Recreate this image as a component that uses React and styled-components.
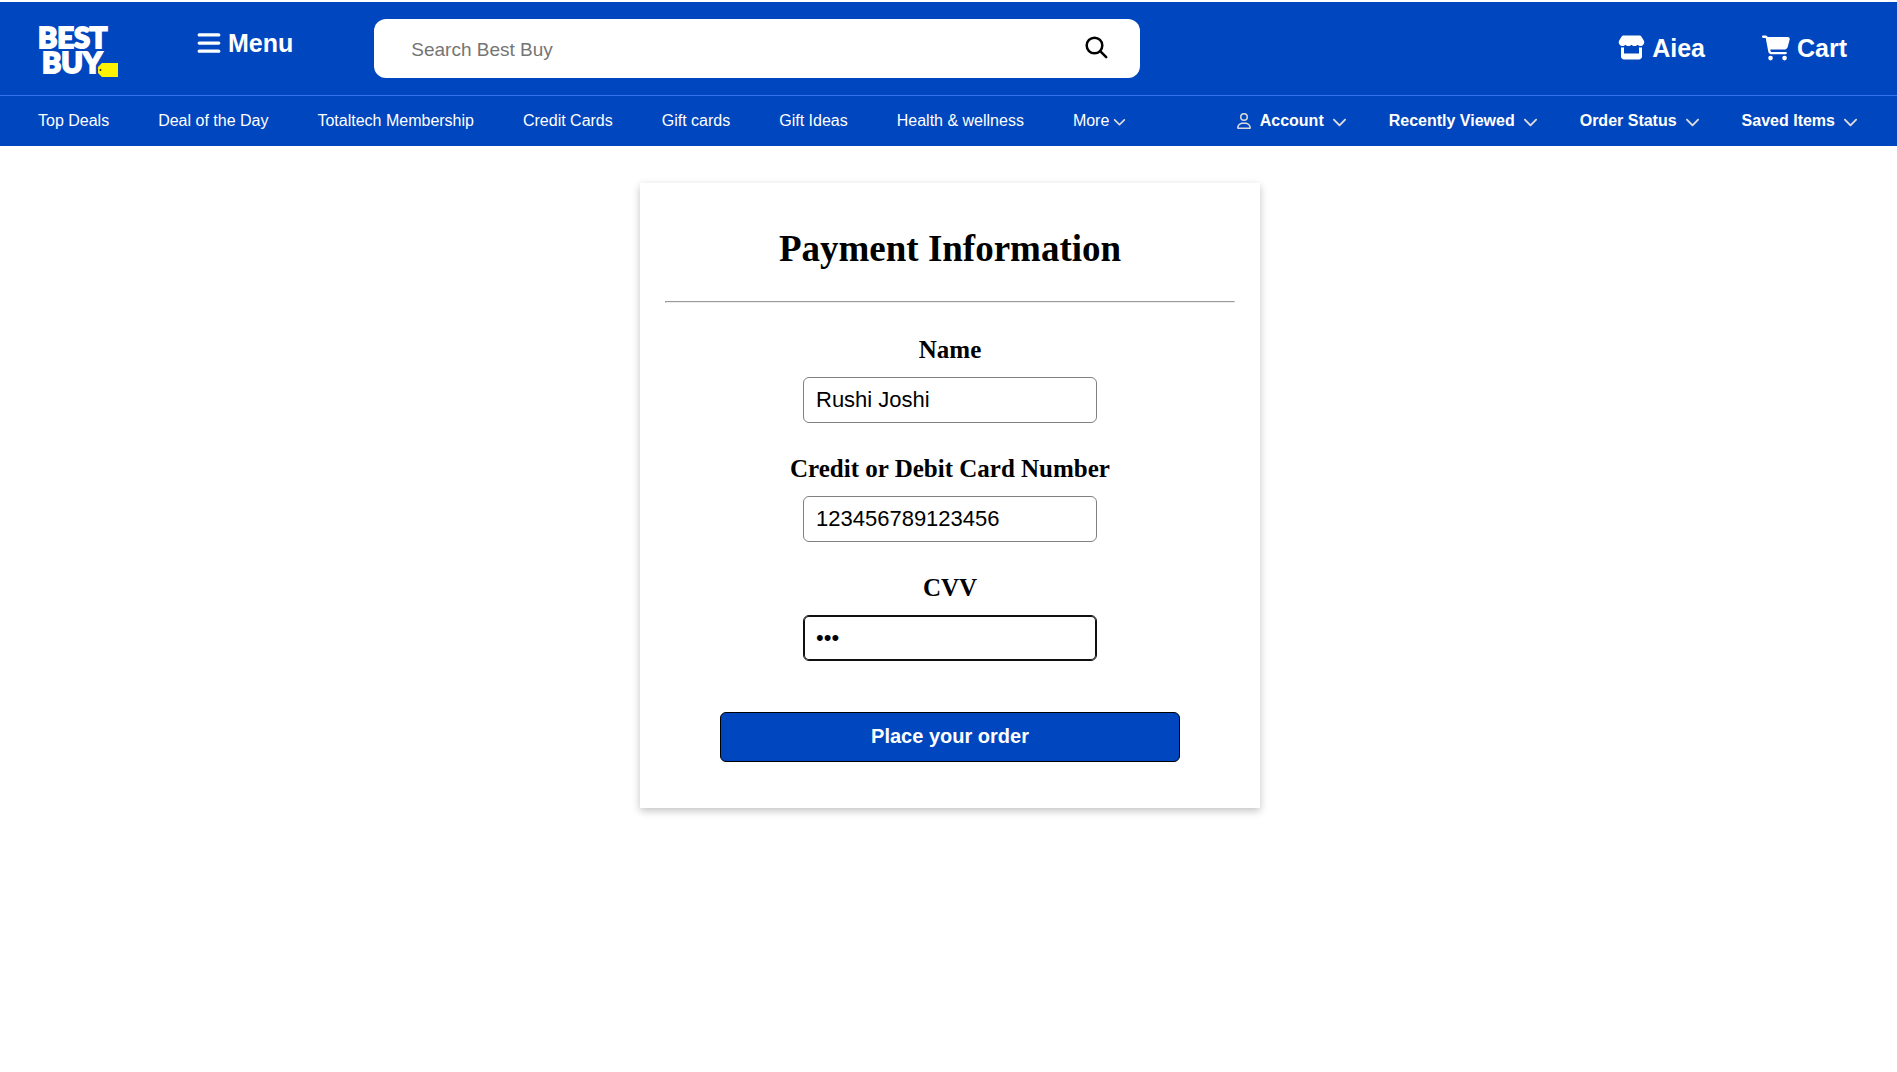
import React from "react";
import styled, { createGlobalStyle } from "styled-components";
import {
  FaBars,
  FaCartShopping,
  FaChevronDown,
  FaRegUser,
  FaStore,
} from "react-icons/fa6";

const BLUE = "#0046be";
const SANS = '"Liberation Sans", Arial, sans-serif';
const SERIF = '"Liberation Serif", "Times New Roman", serif';

const GlobalStyle = createGlobalStyle`
  *, *::before, *::after { box-sizing: border-box; }
  body {
    margin: 0;
    padding-top: 2px;
    background: #fff;
    color: #000;
    font-family: ${SANS};
  }
  button, input { font-family: inherit; }
`;

const Header = styled.header`
  background: ${BLUE};
  color: #fff;
`;

const TopBar = styled.div`
  display: flex;
  align-items: center;
  min-height: 94px;
  padding: 17px 50px 17px 38px;
  border-bottom: 1px solid #3370f0;
`;

const LogoLink = styled.a`
  position: relative;
  width: 80px;
  flex: none;
  margin-right: 78px;
  color: #fff;
  text-decoration: none;
`;

const LogoText = styled.span`
  display: block;
  width: 68px;
  font-family: Lato, ${SANS};
  font-size: 29px;
  font-weight: 900;
  line-height: 25px;
  text-align: center;
  -webkit-text-stroke: 2px #fff;
`;

const Tag = styled.svg`
  position: absolute;
  right: 0;
  bottom: -3px;
  width: 20px;
  height: 14px;
`;

const MenuButton = styled.button`
  display: flex;
  align-items: center;
  align-self: flex-start;
  gap: 6px;
  margin-right: 81px;
  padding: 9px 0;
  border: 0;
  background: none;
  color: inherit;
  font-size: 25px;
  font-weight: 700;
  line-height: 30px;
  cursor: pointer;
`;

const SearchForm = styled.form`
  display: flex;
  align-items: center;
  flex: 0 1 766px;
  height: 59px;
  padding: 0 29px 0 37px;
  border-radius: 12px;
  background: #fff;
`;

const SearchInput = styled.input`
  flex: 1;
  min-width: 0;
  padding: 2px 0 0;
  border: 0;
  outline: 0;
  background: none;
  font-size: 19px;
  line-height: 24px;
  &::placeholder { color: #757575; }
`;

const SearchButton = styled.button`
  display: flex;
  padding: 2px 3px 4px;
  border: 0;
  background: none;
  color: #000;
  cursor: pointer;
`;

const TopLinks = styled.div`
  display: flex;
  gap: 57px;
  margin-left: auto;
  padding-bottom: 2px;
`;

const TopLink = styled.a`
  display: flex;
  align-items: center;
  gap: 7px;
  color: inherit;
  font-size: 25px;
  font-weight: 700;
  line-height: 30px;
  text-decoration: none;
`;

const NavBar = styled.nav`
  display: flex;
  align-items: center;
  justify-content: space-between;
  min-height: 50px;
  padding: 0 39px 0 38px;
`;

const NavGroup = styled.div`
  display: flex;
  align-items: center;
  gap: ${(p) => p.$gap}px;
`;

const NavLink = styled.a`
  color: inherit;
  font-size: 16px;
  line-height: 20px;
  text-decoration: none;
  white-space: nowrap;
`;

const NavButton = styled.button`
  display: flex;
  align-items: center;
  gap: ${(p) => (p.$bold ? 8 : 4)}px;
  padding: 0;
  border: 0;
  background: none;
  color: inherit;
  font-size: 16px;
  font-weight: ${(p) => (p.$bold ? 700 : 400)};
  line-height: 20px;
  white-space: nowrap;
  cursor: pointer;
  svg { color: #dcdcdc; }
`;

const Main = styled.main`
  display: flex;
  justify-content: center;
  padding: 37px 20px 37px 23px;
`;

const Card = styled.form`
  display: flex;
  flex-direction: column;
  align-items: center;
  width: 100%;
  max-width: 620px;
  padding: 44px 25px 46px;
  background: #fff;
  box-shadow: rgba(0, 0, 0, 0.24) 0 3px 8px;
`;

const Title = styled.h1`
  margin: 0;
  font-family: ${SERIF};
  font-size: 37px;
  font-weight: 700;
  line-height: 44px;
`;

const Rule = styled.hr`
  width: 100%;
  margin: 30px 0 32px;
`;

const Field = styled.div`
  display: flex;
  flex-direction: column;
  align-items: center;
  gap: 12px;
  margin-bottom: 31px;
`;

const Label = styled.label`
  font-family: ${SERIF};
  font-size: 25px;
  font-weight: 700;
  line-height: 30px;
`;

const TextInput = styled.input`
  width: 294px;
  height: 46px;
  padding: 0 12px;
  border: 1px solid #808080;
  border-radius: 6px;
  background: #fff;
  color: #000;
  font-size: 22px;
  &:focus {
    outline: 0;
    border-color: #101010;
    box-shadow: inset 0 0 0 1px #101010;
    caret-color: transparent;
  }
`;

const OrderButton = styled.button`
  width: 100%;
  max-width: 460px;
  height: 50px;
  margin-top: 20px;
  padding: 0 0 2px;
  border: 1px solid #000;
  border-radius: 6px;
  background: ${BLUE};
  color: #fff;
  font-size: 20px;
  font-weight: 700;
  cursor: pointer;
`;

const LINKS = [
  "Top Deals",
  "Deal of the Day",
  "Totaltech Membership",
  "Credit Cards",
  "Gift cards",
  "Gift Ideas",
  "Health & wellness",
];

const ACCOUNT_MENUS = ["Account", "Recently Viewed", "Order Status", "Saved Items"];

const FIELDS = [
  { id: "name", label: "Name", type: "text", value: "Rushi Joshi" },
  { id: "card", label: "Credit or Debit Card Number", type: "text", value: "123456789123456" },
  { id: "cvv", label: "CVV", type: "password", value: "123", focused: true },
];

function Logo() {
  return (
    <LogoLink href="#home">
      <LogoText>BEST<br />BUY</LogoText>
      <Tag viewBox="0 0 20 14" aria-hidden="true">
        <path d="M4 0H20V14H4L0 10V4Z" fill="#fff200" />
        <circle cx="2.500" cy="7" r="1" fill="#1d252c" />
      </Tag>
    </LogoLink>
  );
}

function SearchIcon() {
  return (
    <svg width="23" height="23" viewBox="0 0 23 23" fill="none" stroke="currentColor" strokeWidth="2.500" strokeLinecap="round" aria-hidden="true">
      <circle cx="9.500" cy="9.500" r="7.800" />
      <path d="M15.200 15.200L21.200 21.200" />
    </svg>
  );
}

export default function App() {
  return (
    <>
      <GlobalStyle />
      <Header>
        <TopBar>
          <Logo />
          <MenuButton type="button"><FaBars size={26} />Menu</MenuButton>
          <SearchForm role="search">
            <SearchInput type="text" placeholder="Search Best Buy" aria-label="Search Best Buy" />
            <SearchButton type="button" aria-label="Search"><SearchIcon /></SearchButton>
          </SearchForm>
          <TopLinks>
            <TopLink href="#store"><FaStore size={27} />Aiea</TopLink>
            <TopLink href="#cart"><FaCartShopping size={28} />Cart</TopLink>
          </TopLinks>
        </TopBar>
        <NavBar>
          <NavGroup $gap={49}>
            {LINKS.map((text) => <NavLink href="#" key={text}>{text}</NavLink>)}
            <NavButton type="button">More<FaChevronDown size={13} /></NavButton>
          </NavGroup>
          <NavGroup $gap={42}>
            {ACCOUNT_MENUS.map((text, i) => (
              <NavButton type="button" $bold key={text}>
                {i === 0 && <FaRegUser size={16} />}
                {text}
                <FaChevronDown size={15} />
              </NavButton>
            ))}
          </NavGroup>
        </NavBar>
      </Header>
      <Main>
        <Card>
          <Title>Payment Information</Title>
          <Rule />
          {FIELDS.map((f) => (
            <Field key={f.id}>
              <Label htmlFor={f.id}>{f.label}</Label>
              <TextInput id={f.id} type={f.type} defaultValue={f.value} autoFocus={f.focused} />
            </Field>
          ))}
          <OrderButton type="button">Place your order</OrderButton>
        </Card>
      </Main>
    </>
  );
}
